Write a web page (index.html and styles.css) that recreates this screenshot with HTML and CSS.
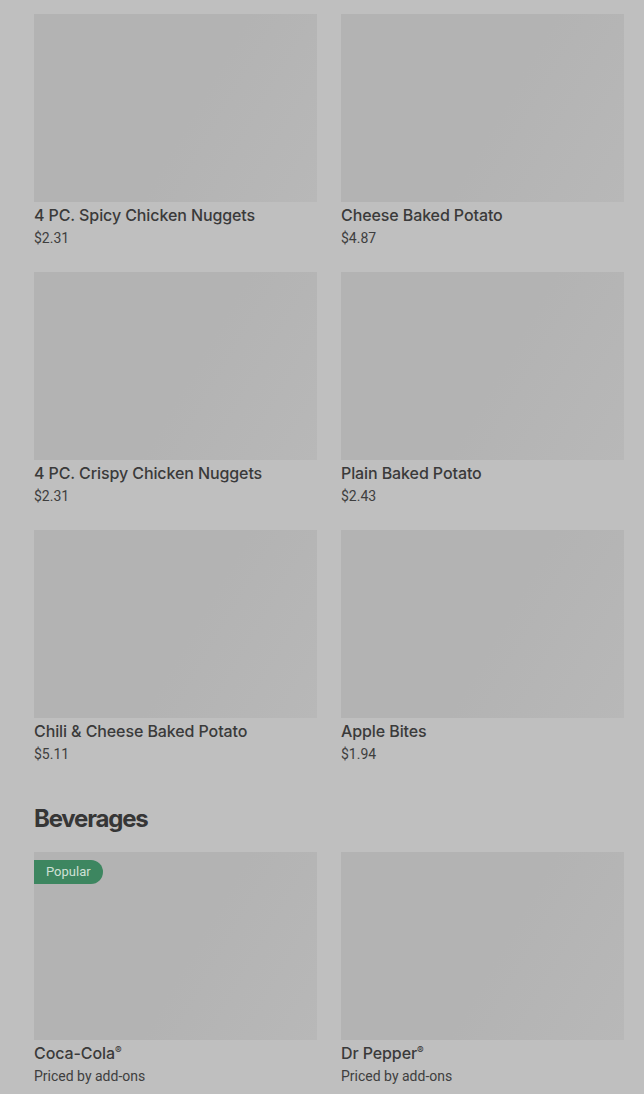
FILE: index.html
```html
<!DOCTYPE html>
<html lang="en">
<head>
    <meta charset="UTF-8">
    <meta name="viewport" content="width=device-width, initial-scale=1.0">
    <title>Menu</title>
    <link rel="stylesheet" href="styles.css">
</head>
<body>
    <div class="menu">
        <section class="section">
            <div class="grid">
                <div class="item">
                    <div class="thumb"></div>
                    <div class="name">4 PC. Spicy Chicken Nuggets</div>
                    <div class="price">$2.31</div>
                </div>
                <div class="item">
                    <div class="thumb"></div>
                    <div class="name">Cheese Baked Potato</div>
                    <div class="price">$4.87</div>
                </div>
                <div class="item">
                    <div class="thumb"></div>
                    <div class="name">4 PC. Crispy Chicken Nuggets</div>
                    <div class="price">$2.31</div>
                </div>
                <div class="item">
                    <div class="thumb"></div>
                    <div class="name">Plain Baked Potato</div>
                    <div class="price">$2.43</div>
                </div>
                <div class="item">
                    <div class="thumb"></div>
                    <div class="name">Chili &amp; Cheese Baked Potato</div>
                    <div class="price">$5.11</div>
                </div>
                <div class="item">
                    <div class="thumb"></div>
                    <div class="name">Apple Bites</div>
                    <div class="price">$1.94</div>
                </div>
            </div>
        </section>

        <section class="section">
            <h2 class="section-title">Beverages</h2>
            <div class="grid">
                <div class="item">
                    <div class="thumb">
                        <span class="badge">Popular</span>
                    </div>
                    <div class="name">Coca-Cola<sup>®</sup></div>
                    <div class="price">Priced by add-ons</div>
                </div>
                <div class="item">
                    <div class="thumb"></div>
                    <div class="name">Dr Pepper<sup>®</sup></div>
                    <div class="price">Priced by add-ons</div>
                </div>
            </div>
        </section>
    </div>
</body>
</html>
```

FILE: styles.css
```css
body {
    margin: 0;
    background-color: #bfbfbf;
    font-family: Roboto, "Liberation Sans", sans-serif;
    color: #383838;
}
.menu {
    padding: 14px 20px 0 34px;
}
.section {
    margin-bottom: 39px;
}
.section-title {
    margin: 0 0 17px;
    font-family: Inter, Roboto, sans-serif;
    font-size: 24px;
    line-height: 32px;
    font-weight: 700;
    letter-spacing: -1.2px;
    color: #363636;
}
.grid {
    display: grid;
    grid-template-columns: 1fr 1fr;
    column-gap: 24px;
    row-gap: 24px;
}
.thumb {
    position: relative;
    height: 188px;
    background: linear-gradient(120deg, #b3b3b3 0%, #b3b3b3 55%, #b8b8b8 100%);
}
.name {
    margin-top: 1px;
    font-family: Inter, Roboto, sans-serif;
    font-size: 16px;
    line-height: 24px;
    font-weight: 500;
    letter-spacing: -0.1px;
    color: #3a3a3a;
}
.name sup {
    font-size: 10px;
    vertical-align: 5px;
    line-height: 0;
}
.price {
    margin-top: 1px;
    font-size: 14px;
    line-height: 20px;
    color: #3e3e3e;
}
.badge {
    position: absolute;
    top: 8px;
    left: 0;
    padding: 0 12px;
    height: 24px;
    line-height: 24px;
    font-size: 13px;
    color: #cfe0d6;
    background-color: #3d8660;
    border-radius: 0 12px 12px 0;
}
```
